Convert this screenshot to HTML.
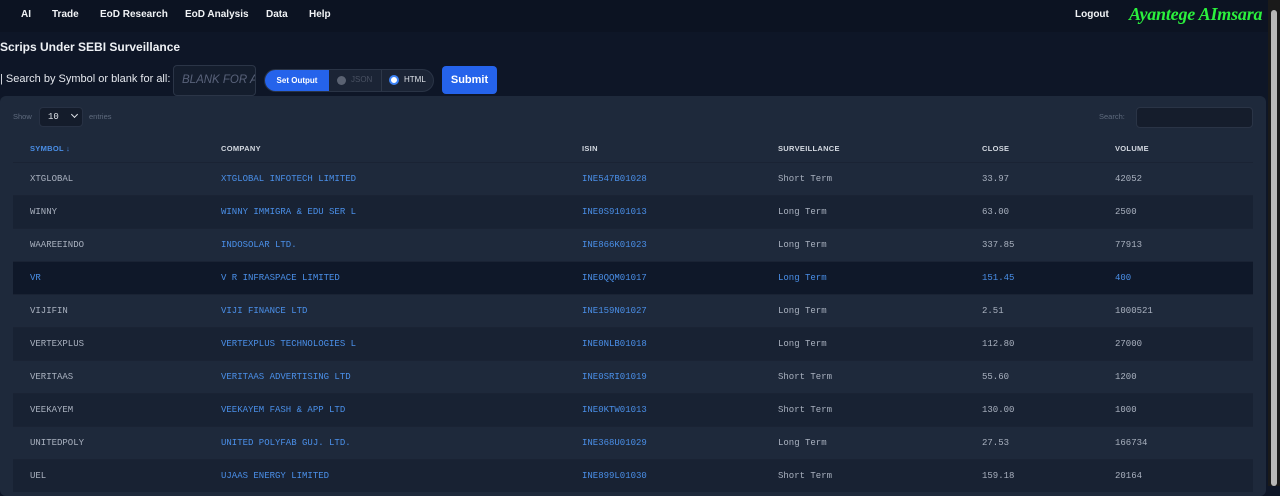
<!DOCTYPE html>
<html><head><meta charset="utf-8"><style>
*{margin:0;padding:0;box-sizing:border-box}
body{width:1280px;height:486px;overflow:hidden;background:#0e1627;font-family:"Liberation Sans",sans-serif;color:#fff;position:relative}
.nav{position:absolute;top:0;left:0;width:1268px;height:32px;background:#0c1322}
.nav span{position:absolute;top:9px;font-size:10px;font-weight:bold;color:#f1f3f6;white-space:nowrap}
.logo{position:absolute;left:1129px;top:4px;font-family:"Liberation Serif",serif;font-style:italic;font-weight:bold;font-size:18px;color:#2bf03d;white-space:nowrap;letter-spacing:-0.2px}
h1{position:absolute;left:0;top:40px;font-size:12px;font-weight:bold;color:#eef1f5;white-space:nowrap}
.lbl{position:absolute;left:0;top:73px;font-size:11px;color:#e5e8ee;white-space:nowrap}
.inp{position:absolute;left:173px;top:65px;width:83px;height:31px;border:1px solid #2b3547;border-radius:4px;background:#141d2d;color:#59627a;font-style:italic;font-size:11.5px;padding:8px 8px;overflow:hidden;white-space:nowrap}
.tog{position:absolute;left:264px;top:69px;width:170px;height:23px;border-radius:12px;background:#1b2435;border:1px solid #2a3446;overflow:hidden}
.tog .so{position:absolute;left:0;top:0;width:64px;height:23px;background:#2563eb;font-size:8px;font-weight:bold;line-height:21px;text-align:center}
.tog .j{position:absolute;left:72px;top:6px;width:9px;height:9px;border-radius:50%;background:#5a6272}
.tog .jt{position:absolute;left:86px;top:5px;font-size:8px;color:#4a5263}
.tog .sep{position:absolute;left:116px;top:0;width:1px;height:23px;background:#2e3849}
.tog .h{position:absolute;left:124px;top:5px;width:10px;height:10px;border-radius:50%;border:2.5px solid #3b82f6;background:#fff}
.tog .ht{position:absolute;left:139px;top:5px;font-size:8px;color:#e0e4ea}
.btn{position:absolute;left:442px;top:66px;width:55px;height:28px;border-radius:4px;background:#2563eb;font-size:11px;font-weight:bold;text-align:center;line-height:28px}
.panel{position:absolute;left:0;top:96px;width:1266px;height:400px;background:#1e293b;border-radius:6px}
.show{position:absolute;left:13px;top:112px;font-size:7.5px;color:#5f6b7e}
.sel{position:absolute;left:39px;top:107px;width:44px;height:20px;border-radius:4px;background:#141c2b;border:1px solid #273144;font-family:"Liberation Mono",monospace;font-size:9px;color:#dfe3e9;padding:4px 0 0 8px;white-space:nowrap}
.sel i{position:absolute;left:32px;top:4px;width:5px;height:5px;border-right:1.5px solid #dfe3e9;border-bottom:1.5px solid #dfe3e9;transform:rotate(45deg)}
.ent{position:absolute;left:89px;top:112px;font-size:7.5px;color:#5f6b7e}
.srch{position:absolute;left:1099px;top:112px;font-size:7.5px;color:#5f6b7e}
.sbox{position:absolute;left:1136px;top:107px;width:117px;height:21px;border-radius:4px;background:#151d2c;border:1px solid #2a3446}
.th{position:absolute;top:144px;font-size:7.5px;font-weight:bold;color:#d3d8e0;letter-spacing:.3px}
.row{position:absolute;left:13px;width:1240px;height:33px;border-top:1px solid #1a2334}
.row span{position:absolute;top:11px;font-family:"Liberation Mono",monospace;font-size:9px;color:#a9b1bf;white-space:nowrap}
.row .b{color:#4a8fe8}
.odd{background:#1e293b}.even{background:#182233}.hov{background:#0f1829}
.hov span{color:#4a8fe8}
.sb{position:absolute;left:1268px;top:0;width:12px;height:486px;background:#1a1a1a}
.sb div{position:absolute;left:3px;top:10px;width:6px;height:476px;background:#b8b8b8;border-radius:3px}
</style></head><body>
<div class="nav">
<span style="left:21px">AI</span><span style="left:52px">Trade</span><span style="left:100px">EoD Research</span><span style="left:185px">EoD Analysis</span><span style="left:266px">Data</span><span style="left:309px">Help</span><span style="left:1075px">Logout</span>
<div class="logo">Ayantege AImsara</div>
</div>
<h1>Scrips Under SEBI Surveillance</h1>
<div class="lbl">| Search by Symbol or blank for all:</div>
<div class="inp">BLANK FOR ALL</div>
<div class="tog"><div class="so">Set Output</div><div class="j"></div><div class="jt">JSON</div><div class="sep"></div><div class="h"></div><div class="ht">HTML</div></div>
<div class="btn">Submit</div>
<div class="panel"></div>
<div class="show">Show</div><div class="sel">10<i></i></div><div class="ent">entries</div>
<div class="srch">Search:</div><div class="sbox"></div>
<div class="th" style="left:30px;color:#4a8fe8">SYMBOL ↓</div>
<div class="th" style="left:221px">COMPANY</div>
<div class="th" style="left:582px">ISIN</div>
<div class="th" style="left:778px">SURVEILLANCE</div>
<div class="th" style="left:982px">CLOSE</div>
<div class="th" style="left:1115px">VOLUME</div>

<div class="row odd" style="top:162px"><span style="left:17px">XTGLOBAL</span><span class="b" style="left:208px">XTGLOBAL INFOTECH LIMITED</span><span class="b" style="left:569px">INE547B01028</span><span style="left:765px">Short Term</span><span style="left:969px">33.97</span><span style="left:1102px">42052</span></div>
<div class="row even" style="top:195px"><span style="left:17px">WINNY</span><span class="b" style="left:208px">WINNY IMMIGRA &amp; EDU SER L</span><span class="b" style="left:569px">INE0S9101013</span><span style="left:765px">Long Term</span><span style="left:969px">63.00</span><span style="left:1102px">2500</span></div>
<div class="row odd" style="top:228px"><span style="left:17px">WAAREEINDO</span><span class="b" style="left:208px">INDOSOLAR LTD.</span><span class="b" style="left:569px">INE866K01023</span><span style="left:765px">Long Term</span><span style="left:969px">337.85</span><span style="left:1102px">77913</span></div>
<div class="row hov" style="top:261px"><span style="left:17px">VR</span><span class="b" style="left:208px">V R INFRASPACE LIMITED</span><span class="b" style="left:569px">INE0QQM01017</span><span style="left:765px">Long Term</span><span style="left:969px">151.45</span><span style="left:1102px">400</span></div>
<div class="row odd" style="top:294px"><span style="left:17px">VIJIFIN</span><span class="b" style="left:208px">VIJI FINANCE LTD</span><span class="b" style="left:569px">INE159N01027</span><span style="left:765px">Long Term</span><span style="left:969px">2.51</span><span style="left:1102px">1000521</span></div>
<div class="row even" style="top:327px"><span style="left:17px">VERTEXPLUS</span><span class="b" style="left:208px">VERTEXPLUS TECHNOLOGIES L</span><span class="b" style="left:569px">INE0NLB01018</span><span style="left:765px">Long Term</span><span style="left:969px">112.80</span><span style="left:1102px">27000</span></div>
<div class="row odd" style="top:360px"><span style="left:17px">VERITAAS</span><span class="b" style="left:208px">VERITAAS ADVERTISING LTD</span><span class="b" style="left:569px">INE0SRI01019</span><span style="left:765px">Short Term</span><span style="left:969px">55.60</span><span style="left:1102px">1200</span></div>
<div class="row even" style="top:393px"><span style="left:17px">VEEKAYEM</span><span class="b" style="left:208px">VEEKAYEM FASH &amp; APP LTD</span><span class="b" style="left:569px">INE0KTW01013</span><span style="left:765px">Short Term</span><span style="left:969px">130.00</span><span style="left:1102px">1000</span></div>
<div class="row odd" style="top:426px"><span style="left:17px">UNITEDPOLY</span><span class="b" style="left:208px">UNITED POLYFAB GUJ. LTD.</span><span class="b" style="left:569px">INE368U01029</span><span style="left:765px">Long Term</span><span style="left:969px">27.53</span><span style="left:1102px">166734</span></div>
<div class="row even" style="top:459px"><span style="left:17px">UEL</span><span class="b" style="left:208px">UJAAS ENERGY LIMITED</span><span class="b" style="left:569px">INE899L01030</span><span style="left:765px">Short Term</span><span style="left:969px">159.18</span><span style="left:1102px">20164</span></div>
<div class="sb"><div></div></div>
</body></html>
